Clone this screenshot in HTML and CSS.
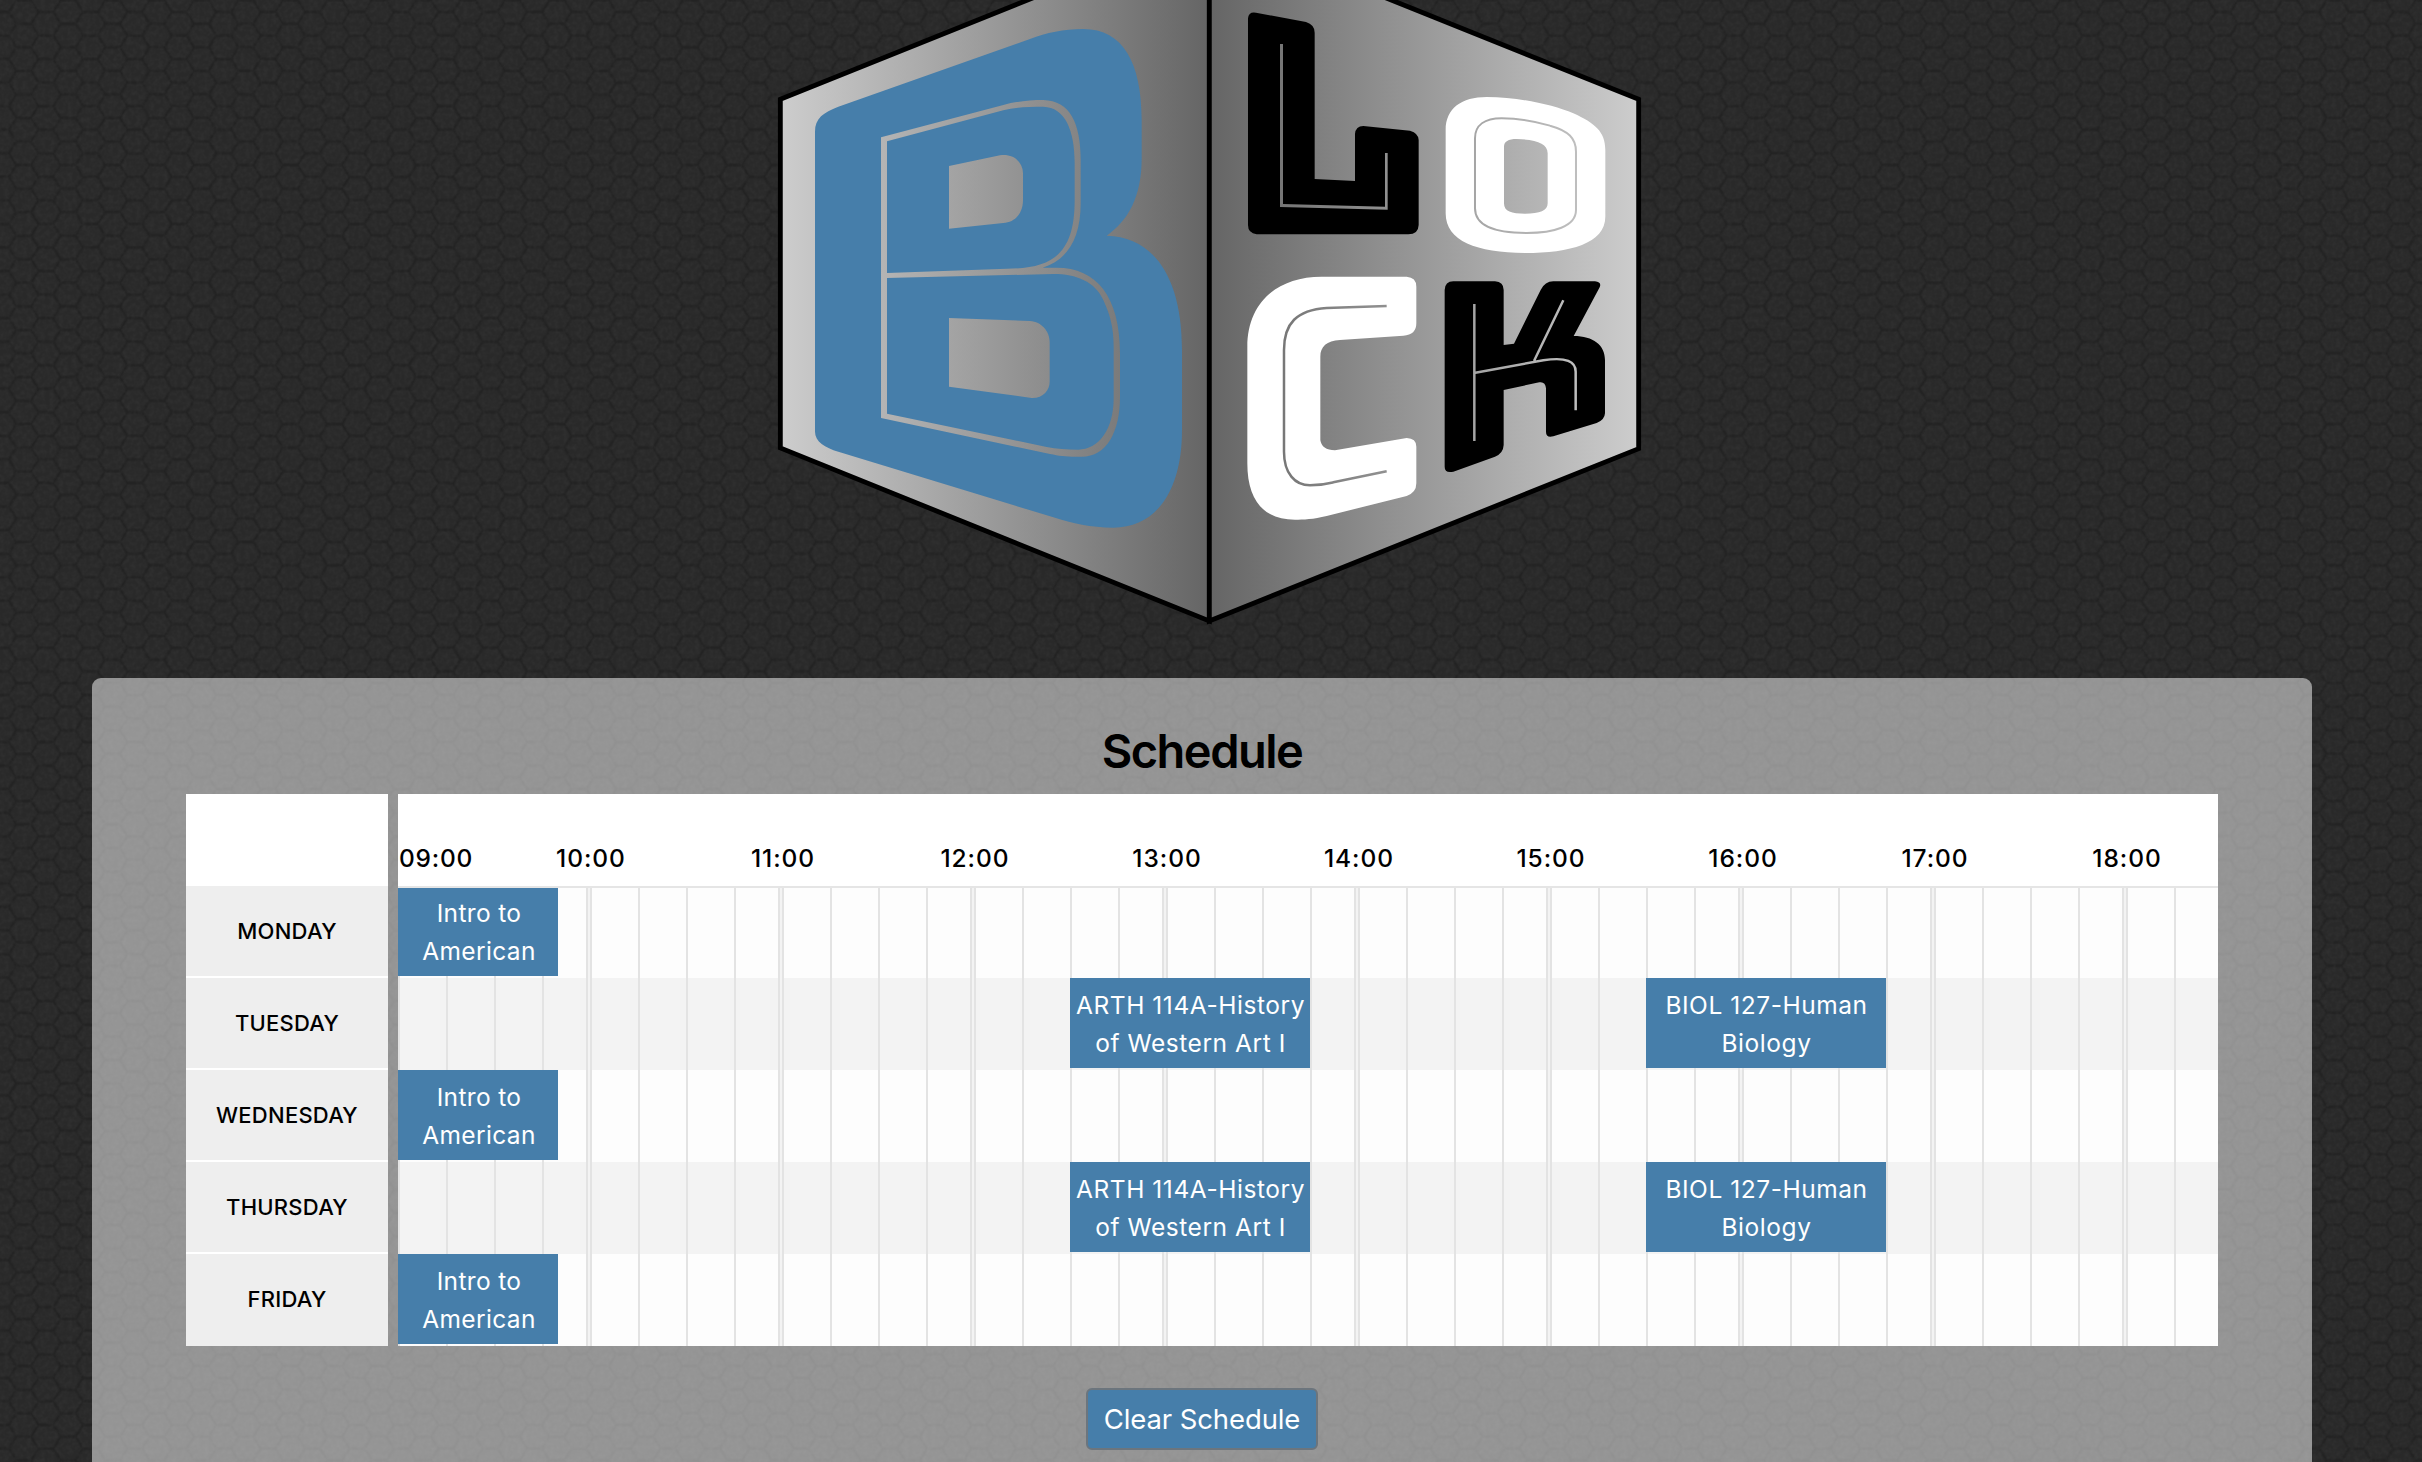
FILE: index.html
```
<!DOCTYPE html>
<html lang="en">
<head>
<meta charset="utf-8">
<title>Block Schedule</title>
<link rel="stylesheet" href="styles.css">
</head>
<body>
<svg class="backdrop" aria-hidden="true">
  <defs>
    <pattern id="hex" width="44.43" height="23.55" patternUnits="userSpaceOnUse" patternTransform="translate(1.5 .2)">
      <path d="M0 11.78H7.4L14.8 0H29.6L37 11.78H44.43M37 11.78L29.6 23.55H14.8L7.4 11.78" fill="none" stroke="#262626" stroke-width="4"/>
      <path d="M0 11.78H7.4L14.8 0H29.6L37 11.78H44.43M37 11.78L29.6 23.55H14.8L7.4 11.78" fill="none" stroke="#222" stroke-width="1.6"/>
    </pattern>
    <filter id="grain" x="0" y="0" width="100%" height="100%">
      <feTurbulence type="fractalNoise" baseFrequency=".22" numOctaves="2" seed="4"/>
      <feColorMatrix values="0 0 0 0 1  0 0 0 0 1  0 0 0 0 1  .28 0 0 0 -.09"/>
    </filter>
  </defs>
  <rect width="100%" height="100%" fill="#292929"/>
  <rect width="100%" height="100%" fill="url(#hex)"/>
  <rect width="100%" height="100%" filter="url(#grain)" opacity=".2"/>
</svg>

<header class="brand">
  <svg class="logo" viewBox="3 0 2640 1880" role="img" aria-label="Block">
    <defs>
      <linearGradient id="left" gradientUnits="userSpaceOnUse" x1="31" y1="0" x2="1318" y2="0"><stop stop-color="#cdcdcd"/><stop offset="1" stop-color="#656565"/></linearGradient>
      <linearGradient id="right" gradientUnits="userSpaceOnUse" x1="1318" y1="0" x2="2606" y2="0"><stop stop-color="#656565"/><stop offset="1" stop-color="#cdcdcd"/></linearGradient>
      <linearGradient id="etch" gradientUnits="userSpaceOnUse" x1="28" y1="0" x2="1316" y2="0"><stop stop-color="#656565"/><stop offset="1" stop-color="#cdcdcd"/></linearGradient>
    </defs>
    <g stroke="#000" stroke-width="14.5">
      <path fill="url(#left)" d="M31 298L1318-219V1863L31 1344Z"/>
      <path fill="url(#right)" d="M2606 298L1318-219V1863L2606 1346Z"/>
    </g>
    <path fill="#467eaa" fill-rule="evenodd" d="M135 395C135 355 160 337 205 320L780 117C830 98 880 87 940 87C1060 87 1115 190 1115 360V475C1115 590 1075 662 1010 707C1150 711 1236 830 1236 1050V1290C1236 1470 1160 1583 1030 1583C960 1583 910 1570 850 1552L205 1355C165 1343 135 1325 135 1295Z
      M333 412L700 315C740 304 780 300 820 300C900 302 932 370 932 480V610C932 720 890 780 818 803H860C980 803 1050 890 1050 1060V1190C1050 1295 1010 1370 935 1370C890 1371 870 1368 840 1362L333 1254Z
      M351 424L700 331C740 321 780 320 820 320C885 322 914 390 914 490V600C914 760 850 806 710 806L351 819Z
      M351 834L850 822C920 822 975 845 1000 900C1020 945 1031 980 1031 1040V1195C1031 1290 985 1349 925 1349C890 1349 860 1347 830 1341L351 1241Z
      M537 498L690 466C735 460 759 490 759 520V600C759 640 735 667 700 669L537 686Z
      M537 954L780 963C815 965 839 995 839 1025V1145C839 1170 820 1195 785 1194L537 1160Z"/>
    <g transform="translate(1290 0)">
      <path fill="#000" d="M144 55Q146 34 168 38L318 66Q344 74 344 98V537L465 543V402Q467 378 490 378L630 392Q656 400 656 420V675Q655 703 625 703H170Q144 700 144 675Z"/>
      <path fill="url(#etch)" d="M240 132H249V612L555 620V459H563V629L240 621Z"/>
      <path fill="#fff" fill-rule="evenodd" d="M737 390C737 325 785 291 860 291C960 291 1060 315 1120 340C1185 370 1216 395 1216 450V650C1216 730 1110 759 975 759C830 757 737 725 737 640Z M912 440C912 425 925 417 950 417C1010 419 1043 430 1043 460V610C1043 632 1020 641 975 641C935 641 912 635 912 610Z"/>
      <path fill="none" stroke="url(#etch)" stroke-width="6" d="M825 415C825 375 855 355 905 355C960 355 1010 365 1050 377C1105 392 1128 415 1128 455V630C1128 680 1060 699 980 699C890 699 825 680 825 625Z"/>
      <g transform="translate(0 780)">
        <path fill="#fff" d="M365 50H620Q649 52 649 80V190Q649 225 610 227L420 240C380 242 361 260 361 290V540Q365 570 405 571L620 534Q649 535 649 560V670Q649 698 620 708L380 768C340 778 310 779 285 779C190 779 142 720 142 610V260C142 130 230 50 365 50Z"/>
        <path fill="none" stroke="url(#etch)" stroke-width="7.5" d="M560 138L380 144C290 150 252 190 252 270V575C252 640 285 676 330 676C365 676 380 672 400 667L560 634"/>
        <path fill="#000" d="M760 64H885Q911 66 911 90V255L942 251L1022 90Q1035 64 1060 64H1185Q1206 66 1199 82L1121 228C1180 228 1215 255 1215 300V460Q1214 480 1190 489L1060 529Q1038 535 1038 515V385Q1036 364 1018 367L911 390V555Q910 580 885 590L760 635Q734 641 734 620V90Q735 64 760 64Z"/>
        <path fill="none" stroke="url(#etch)" stroke-width="7.5" d="M823 132V543M826 338L1030 301C1100 290 1127 305 1127 335V451M1090 121L1002 303"/>
      </g>
    </g>
  </svg>
</header>

<main class="panel">
  <h1 class="title">Schedule</h1>
  <section class="schedule">
    <ul class="days">
      <li class="day">MONDAY</li>
      <li class="day">TUESDAY</li>
      <li class="day">WEDNESDAY</li>
      <li class="day">THURSDAY</li>
      <li class="day">FRIDAY</li>
    </ul>
    <div class="timeline">
      <div class="hours">
        <span class="hour first">09:00</span><span class="hour">10:00</span><span class="hour">11:00</span><span class="hour">12:00</span><span class="hour">13:00</span><span class="hour">14:00</span><span class="hour">15:00</span><span class="hour">16:00</span><span class="hour">17:00</span><span class="hour">18:00</span>
      </div>
      <div class="rows">
        <div class="row"><div class="event intro">Intro to American</div></div>
        <div class="row"><div class="event art">ARTH 114A-History of Western Art I</div><div class="event bio">BIOL 127-Human Biology</div></div>
        <div class="row"><div class="event intro">Intro to American</div></div>
        <div class="row"><div class="event art">ARTH 114A-History of Western Art I</div><div class="event bio">BIOL 127-Human Biology</div></div>
        <div class="row"><div class="event intro">Intro to American</div></div>
      </div>
    </div>
  </section>
  <button class="clear" type="button">Clear Schedule</button>
</main>
</body>
</html>
```
FILE: styles.css
```
* { box-sizing: border-box; }

body {
  margin: 0;
  height: 1462px;
  overflow: hidden;
  background: #292929;
  color: #000;
  font-family: Inter, "Liberation Sans", sans-serif;
}

.backdrop {
  position: absolute;
  inset: 0;
  width: 100%;
  height: 1462px;
  z-index: -1;
}

.brand {
  display: flex;
  justify-content: center;
  height: 678px;
}

.logo {
  display: block;
  width: 880px;
  height: 626.67px;
}

.panel {
  display: flex;
  flex-direction: column;
  align-items: center;
  width: 2220px;
  height: 820px;
  margin-left: 92px;
  padding: 45px 94px 0;
  border-radius: 9px;
  background: rgba(255, 255, 255, .5);
}

.title {
  margin: 0;
  height: 71px;
  font-size: 47px;
  font-weight: 560;
  line-height: 56px;
  letter-spacing: -1.5px;
}

.schedule {
  display: grid;
  grid-template-columns: 202px 1820px;
  column-gap: 10px;
  height: 552px;
}

.days {
  margin: 0;
  padding: 92px 0 0;
  list-style: none;
  background: #fff;
}

.day {
  display: flex;
  align-items: center;
  justify-content: center;
  height: 92px;
  border-bottom: 2px solid #fff;
  background: #eee;
  font-size: 22px;
  font-weight: 500;
  letter-spacing: .25px;
}

.day:last-child { border-bottom-color: #eee; }

.timeline {
  overflow: hidden;
  background: #fff;
}

.hours {
  display: flex;
  position: relative;
  z-index: 1;
  height: 94px;
  padding: 49px 0 0;
  border-bottom: 2px solid #e5e5e5;
  font-size: 24.5px;
  font-weight: 540;
  line-height: 30px;
  letter-spacing: .95px;
}

.hour {
  flex: none;
  width: 192px;
  padding-left: 2px;
  text-align: center;
}

.hour.first {
  width: 96px;
  padding-left: 1px;
  text-align: left;
  letter-spacing: .75px;
}

.rows {
  position: relative;
  height: 460px;
  margin-top: -2px;
  border-bottom: 2px solid #e5e5e5;
}

.row {
  display: grid;
  grid-template-columns: 160px 512px 240px 336px 240px;
  height: 92px;
  background:
    repeating-linear-gradient(90deg, #e3e3e3 0 2px, transparent 2px 48px),
    repeating-linear-gradient(90deg, transparent 0 188px, #e3e3e3 188px 190px, #f3f3f3 190px 192px),
    #fdfdfd;
}

.row:nth-child(even) { background-color: #f3f3f3; }

.event {
  height: 90px;
  padding: 8px 0 0 1px;
  background: #467eaa;
  color: #fff;
  font-size: 24.5px;
  line-height: 38px;
  letter-spacing: .55px;
  text-align: center;
}

.intro {
  grid-column: 1;
  padding-left: 21px;
  padding-right: 19px;
  letter-spacing: .35px;
}

.art { grid-column: 3; }
.bio { grid-column: 5; }

.clear {
  width: 232px;
  height: 62px;
  margin-top: 42px;
  padding: 0;
  border: 2px solid #6c757d;
  border-radius: 6px;
  background: #467eaa;
  color: #fff;
  font: 27.5px/42px Inter, "Liberation Sans", sans-serif;
  letter-spacing: -.1px;
}
```
